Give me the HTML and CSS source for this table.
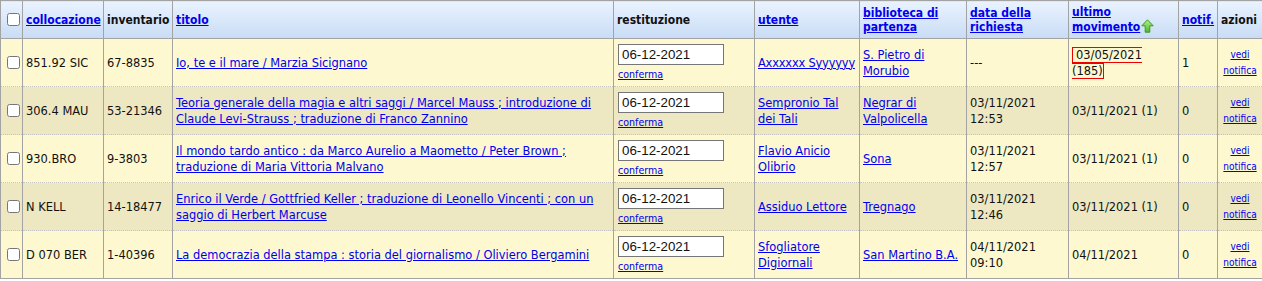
FILE: index.html
```html
<!DOCTYPE html>
<html>
<head>
<meta charset="utf-8">
<link rel="stylesheet" href="styles.css">
</head>
<body>
<table class="grid">
  <colgroup>
    <col style="width:22px"><col style="width:81px"><col style="width:69px"><col style="width:441px"><col style="width:141px"><col style="width:105px"><col style="width:107px"><col style="width:102px"><col style="width:110px"><col style="width:39px"><col style="width:45px">
  </colgroup>
  <thead>
    <tr>
      <th class="chk"><input type="checkbox"></th>
      <th><a href="#">collocazione</a></th>
      <th>inventario</th>
      <th><a href="#">titolo</a></th>
      <th>restituzione</th>
      <th><a href="#">utente</a></th>
      <th><a href="#">biblioteca di partenza</a></th>
      <th><a href="#">data della richiesta</a></th>
      <th><a href="#">ultimo movimento</a><svg class="arrow" width="13" height="14" viewBox="0 0 13 14"><defs><linearGradient id="g" x1="0" y1="0" x2="0" y2="1"><stop offset="0" stop-color="#b8f08a"/><stop offset="1" stop-color="#4cb82a"/></linearGradient></defs><path d="M6.5 0.8 L12.2 6.8 L8.8 6.8 L8.8 13.2 L4.2 13.2 L4.2 6.8 L0.8 6.8 Z" fill="url(#g)" stroke="#3a9a22" stroke-width="1"/></svg></th>
      <th><a href="#">notif.</a></th>
      <th>azioni</th>
    </tr>
  </thead>
  <tbody>
    <tr class="odd">
      <td class="chk"><input type="checkbox"></td>
      <td>851.92 SIC</td>
      <td>67-8835</td>
      <td><a href="#">Io, te e il mare / Marzia Sicignano</a></td>
      <td><input class="date" type="text" value="06-12-2021"><a class="small" href="#">conferma</a></td>
      <td class="tight"><a href="#">Axxxxxx Syyyyyy</a></td>
      <td><a href="#">S. Pietro di Morubio</a></td>
      <td>---</td>
      <td><span class="late">03/05/2021 (185)</span></td>
      <td>1</td>
      <td class="act"><a href="#">vedi notifica</a></td>
    </tr>
    <tr class="even">
      <td class="chk"><input type="checkbox"></td>
      <td>306.4 MAU</td>
      <td>53-21346</td>
      <td><a href="#">Teoria generale della magia e altri saggi / Marcel Mauss ; introduzione di Claude Levi-Strauss ; traduzione di Franco Zannino</a></td>
      <td><input class="date" type="text" value="06-12-2021"><a class="small" href="#">conferma</a></td>
      <td><a href="#">Sempronio Tal dei Tali</a></td>
      <td><a href="#">Negrar di Valpolicella</a></td>
      <td>03/11/2021 12:53</td>
      <td>03/11/2021 (1)</td>
      <td>0</td>
      <td class="act"><a href="#">vedi notifica</a></td>
    </tr>
    <tr class="odd">
      <td class="chk"><input type="checkbox"></td>
      <td>930.BRO</td>
      <td>9-3803</td>
      <td><a href="#">Il mondo tardo antico : da Marco Aurelio a Maometto / Peter Brown ; traduzione di Maria Vittoria Malvano</a></td>
      <td><input class="date" type="text" value="06-12-2021"><a class="small" href="#">conferma</a></td>
      <td><a href="#">Flavio Anicio Olibrio</a></td>
      <td><a href="#">Sona</a></td>
      <td>03/11/2021 12:57</td>
      <td>03/11/2021 (1)</td>
      <td>0</td>
      <td class="act"><a href="#">vedi notifica</a></td>
    </tr>
    <tr class="even">
      <td class="chk"><input type="checkbox"></td>
      <td>N KELL</td>
      <td>14-18477</td>
      <td><a href="#">Enrico il Verde / Gottfried Keller ; traduzione di Leonello Vincenti ; con un saggio di Herbert Marcuse</a></td>
      <td><input class="date" type="text" value="06-12-2021"><a class="small" href="#">conferma</a></td>
      <td><a href="#">Assiduo Lettore</a></td>
      <td><a href="#">Tregnago</a></td>
      <td>03/11/2021 12:46</td>
      <td>03/11/2021 (1)</td>
      <td>0</td>
      <td class="act"><a href="#">vedi notifica</a></td>
    </tr>
    <tr class="odd">
      <td class="chk"><input type="checkbox"></td>
      <td>D 070 BER</td>
      <td>1-40396</td>
      <td><a href="#">La democrazia della stampa : storia del giornalismo / Oliviero Bergamini</a></td>
      <td><input class="date" type="text" value="06-12-2021"><a class="small" href="#">conferma</a></td>
      <td><a href="#">Sfogliatore Digiornali</a></td>
      <td><a href="#">San Martino B.A.</a></td>
      <td>04/11/2021 09:10</td>
      <td>04/11/2021</td>
      <td>0</td>
      <td class="act"><a href="#">vedi notifica</a></td>
    </tr>
  </tbody>
</table>
</body>
</html>
```
FILE: styles.css
```css
html, body {
  margin: 0;
  padding: 0;
  background: #ffffff;
}
body {
  font-family: "DejaVu Sans", sans-serif;
  font-size: 11.45px;
  color: #111;
}
a {
  color: #0000ee;
  text-decoration: underline;
}
.grid {
  width: 1262px;
  table-layout: fixed;
  border-collapse: collapse;
  border: 1px solid #a3a3a3;
}
.grid th {
  height: 37px;
  padding: 0 3px;
  text-align: left;
  vertical-align: middle;
  font-family: "DejaVu Sans Condensed", "DejaVu Sans", sans-serif;
  font-size: 12px;
  font-weight: bold;
  line-height: 14px;
  color: #111;
  background: linear-gradient(to bottom, #eaf3ff, #c8dcf5);
  border-left: 1px solid #a3a3a3;
  border-right: 1px solid #a3a3a3;
  border-bottom: 1px solid #a3a3a3;
}
.grid td {
  height: 47px;
  padding: 0 3px;
  vertical-align: middle;
  line-height: 16px;
  border-left: 1px solid #a3a3a3;
  border-right: 1px solid #a3a3a3;
  border-bottom: 1px dotted #c4c4c4;
}
.grid tbody tr:last-child td {
  border-bottom: 1px solid #a3a3a3;
}
.grid .chk {
  padding: 0 1px;
}
.grid .tight {
  letter-spacing: -0.2px;
}
.chk input {
  margin: 3px 2px 3px 5px;
  width: 13px;
  height: 13px;
  vertical-align: middle;
}
.odd td {
  background: #fdf8d0;
}
.even td {
  background: #ede7c2;
}
.date {
  display: block;
  box-sizing: border-box;
  width: 106px;
  height: 21px;
  margin: 0 0 1px 1px;
  padding: 1px 3px;
  border: 1px solid #767676;
  font-family: "Liberation Sans", Arial, sans-serif;
  font-size: 13.333px;
  color: #111;
  background: #fff;
}
.small {
  display: inline-block;
  font-family: "DejaVu Sans Condensed", "DejaVu Sans", sans-serif;
  font-size: 10.6px;
  line-height: 14px;
  margin-left: 1px;
}
.late {
  border: 1px solid #ee0000;
  padding-left: 3px;
}
.arrow {
  vertical-align: -2px;
  margin-left: 1px;
}
.grid .act {
  padding: 0 1px;
  text-align: center;
  font-family: "DejaVu Sans Condensed", "DejaVu Sans", sans-serif;
  font-size: 10px;
  line-height: 16px;
}
.act a {
  display: inline-block;
  line-height: 16px;
}
```
